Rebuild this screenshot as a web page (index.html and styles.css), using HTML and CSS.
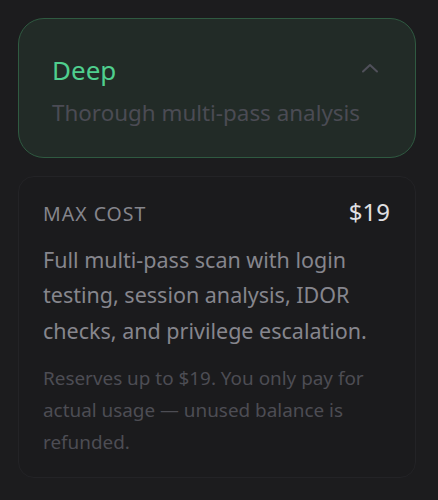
FILE: index.html
```html
<!DOCTYPE html>
<html>
<head>
<meta charset="utf-8">
<link rel="stylesheet" href="styles.css">
</head>
<body>
<div class="wrap">
  <div class="tier">
    <div class="tier-head">
      <span class="tier-name">Deep</span>
      <svg class="chev" width="18" height="12" viewBox="0 0 18 12"><path d="M2 9.5 L9 3 L16 9.5" fill="none" stroke="#50505a" stroke-width="2" stroke-linecap="round" stroke-linejoin="round"/></svg>
    </div>
    <div class="tier-sub">Thorough multi-pass analysis</div>
  </div>
  <div class="detail">
    <div class="cost-row">
      <span class="cost-label">Max cost</span>
      <span class="cost-value">$19</span>
    </div>
    <p class="desc">Full multi-pass scan with login testing, session analysis, IDOR checks, and privilege escalation.</p>
    <p class="note">Reserves up to $19. You only pay for actual usage — unused balance is refunded.</p>
  </div>
</div>
</body>
</html>
```
FILE: styles.css
```css
* { box-sizing: border-box; }
html, body { margin: 0; padding: 0; background: #1c1c1e; }
body { font-family: "Noto Sans", "Open Sans", sans-serif; }
.wrap { padding: 18px 22px 18px 18px; display: flex; flex-direction: column; gap: 18px; }
.tier {
  border: 1.5px solid #2f5a41;
  background: #222b27;
  border-radius: 26px;
  padding: 32.5px 34px 29.5px 33px;
}
.tier-head { display: flex; justify-content: space-between; align-items: center; }
.tier-name { color: #4fcf8e; font-size: 26px; line-height: 36px; }
.chev { margin-right: 2px; margin-top: -4px; }
.tier-sub { color: #4b4b54; font-size: 22.4px; line-height: 30px; margin-top: 10px; }
.detail {
  border: 1px solid #232326;
  background: #1b1b1d;
  border-radius: 16px;
  padding: 20px 25px 19px 24px;
}
.cost-row { display: flex; justify-content: space-between; align-items: baseline; }
.cost-label { color: #85858c; font-size: 19.5px; line-height: 26px; letter-spacing: 1px; text-transform: uppercase; }
.cost-value { color: #e0e0e3; font-size: 24px; line-height: 30px; }
.desc { margin: 14.5px 0 0; color: #86868d; font-size: 21.5px; line-height: 35.5px; }
.note { margin: 14px 0 0; color: #4d4d54; font-size: 18.9px; line-height: 32px; }
```
